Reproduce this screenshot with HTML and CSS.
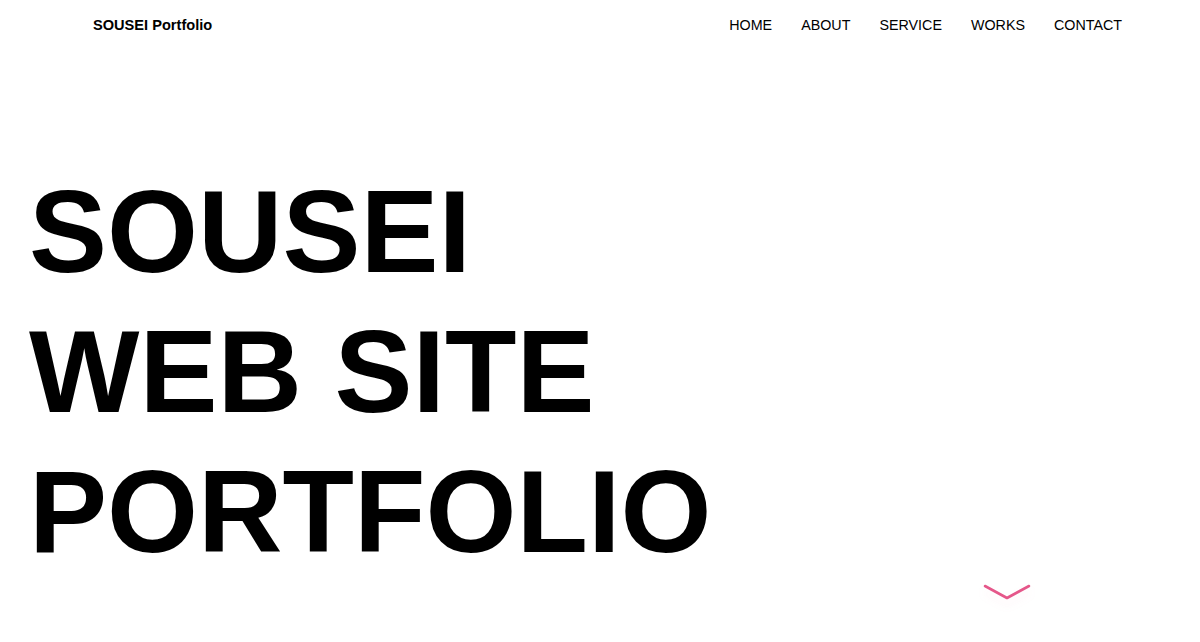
FILE: index.html
```html
<!DOCTYPE html>
<html lang="ja">
<head>
  <meta charset="UTF-8">
  <meta name="viewport" content="width=device-width, initial-scale=1.0">
  <title>SOUSEI Portfolio</title>
  <link rel="stylesheet" href="styles.css">
</head>
<body>

  <!-- Header -->
  <header class="site-header">
    <div class="logo">SOUSEI Portfolio</div>
    <nav class="global-nav">
      <a href="#home">HOME</a>
      <a href="#about">ABOUT</a>
      <a href="#service">SERVICE</a>
      <a href="#works">WORKS</a>
      <a href="#contact">CONTACT</a>
    </nav>
  </header>

  <!-- Hero -->
  <section class="hero" id="home">
    <h1 class="hero-title">SOUSEI<br>WEB SITE<br>PORTFOLIO</h1>
    <a class="scroll-down" href="#about" aria-label="scroll">
      <svg width="50" height="22" viewBox="0 0 50 22">
        <polyline points="2,3 24,15 46,3" fill="none" stroke="#e5578a" stroke-width="2.6" stroke-linecap="round" stroke-linejoin="round"/>
      </svg>
    </a>
  </section>

</body>
</html>
```

FILE: styles.css
```css
body {
  font-family: "Liberation Sans", Arial, sans-serif;
  margin: 0;
  padding: 0;
  color: #000;
  background: #fff;
}

.site-header {
  display: flex;
  justify-content: space-between;
  align-items: center;
  height: 49px;
  padding: 0 78px 0 93px;
}

.logo {
  font-weight: bold;
  font-size: 14.6px;
}

.global-nav {
  display: flex;
  gap: 29px;
}

.global-nav a {
  color: #000;
  text-decoration: none;
  font-size: 14.3px;
}

.hero {
  position: relative;
  height: 593px;
}

.hero-title {
  margin: 0;
  padding: 113px 0 0 29px;
  font-size: 117px;
  line-height: 140px;
  font-weight: bold;
}

.scroll-down {
  position: absolute;
  left: 983px;
  top: 534px;
  display: block;
  filter: drop-shadow(0 6px 4px rgba(229, 87, 138, 0.08));
}
```
